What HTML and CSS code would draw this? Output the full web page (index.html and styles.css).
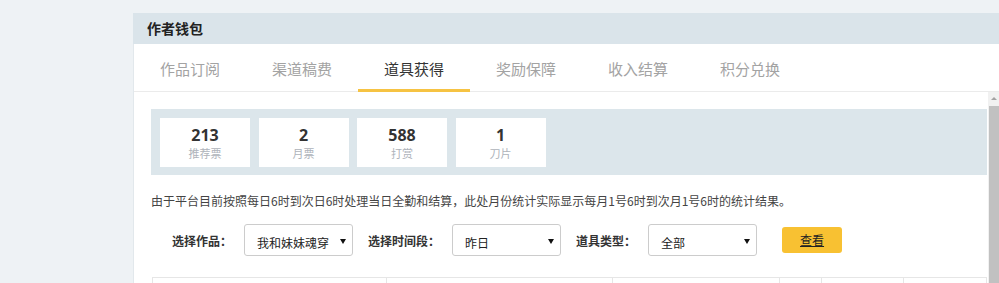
FILE: index.html
```html
<!DOCTYPE html>
<html>
	<head>
		<meta charset="utf-8">
		<title>作者钱包</title>
		<link rel="stylesheet" href="styles.css">
	</head>
	<body>
		<div class="wallet">
			<div class="wallet-hd">作者钱包</div>
			<div class="tabs">
				<a class="tab" href="javascript:;">作品订阅</a>
				<a class="tab" href="javascript:;">渠道稿费</a>
				<a class="tab active" href="javascript:;">道具获得</a>
				<a class="tab" href="javascript:;">奖励保障</a>
				<a class="tab" href="javascript:;">收入结算</a>
				<a class="tab" href="javascript:;">积分兑换</a>
			</div>
			<div class="frame">
				<div class="main">
					<div class="stats">
						<div class="stat"><b>213</b><span>推荐票</span></div>
						<div class="stat"><b>2</b><span>月票</span></div>
						<div class="stat"><b>588</b><span>打赏</span></div>
						<div class="stat"><b>1</b><span>刀片</span></div>
					</div>
					<p class="notice">由于平台目前按照每日6时到次日6时处理当日全勤和结算，此处月份统计实际显示每月1号6时到次月1号6时的统计结果。</p>
					<div class="filter">
						<label>选择作品：</label>
						<div class="select"><span class="val">我和妹妹魂穿</span><i class="arrow"></i></div>
						<label>选择时间段：</label>
						<div class="select"><span class="val">昨日</span><i class="arrow"></i></div>
						<label>道具类型：</label>
						<div class="select"><span class="val">全部</span><i class="arrow"></i></div>
						<a class="btn" href="javascript:;">查看</a>
					</div>
					<div class="table">
						<div class="cell"></div>
						<div class="cell"></div>
						<div class="cell"></div>
						<div class="cell"></div>
						<div class="cell"></div>
						<div class="cell"></div>
					</div>
				</div>
				<div class="scrollbar">
					<div class="sb-up"></div>
					<div class="sb-thumb"></div>
				</div>
			</div>
		</div>
	</body>
</html>
```

FILE: styles.css
```css
*{
	padding: 0px;
	margin: 0px;
	box-sizing: border-box;
}
body{
	width: 999px;
	height: 283px;
	overflow: hidden;
	background-color: #eef2f5;
	font-family: "Noto Sans CJK SC", sans-serif;
	color: #333;
}
.wallet{
	margin: 13px 0px 0px 133px;
	background-color: #fff;
	border-left: 1px solid #e2e8ec;
	height: 400px;
}
.wallet-hd{
	height: 31px;
	line-height: 31px;
	padding-left: 14px;
	margin-left: -1px;
	background-color: #dae4ea;
	font-size: 14px;
	font-weight: bold;
	color: #222;
}
.tabs{
	display: flex;
	height: 48px;
	border-bottom: 1px solid #ebebeb;
}
.tab{
	width: 112px;
	height: 48px;
	padding-top: 13px;
	line-height: 24px;
	text-align: center;
	font-size: 15px;
	color: #a3a3a3;
	text-decoration: none;
	border-bottom: 3px solid transparent;
}
.tab.active{
	color: #333;
	border-bottom-color: #f6c343;
}
.frame{
	display: flex;
	height: 300px;
}
.main{
	flex: 1;
	padding: 17px 1px 0px 17px;
}
.scrollbar{
	width: 11px;
	display: flex;
	flex-direction: column;
	background-color: #f1f1f1;
}
.sb-up{
	height: 14px;
	position: relative;
}
.sb-up:after{
	content: "";
	position: absolute;
	left: 3px;
	top: 5px;
	border-left: 3px solid transparent;
	border-right: 3px solid transparent;
	border-bottom: 3px solid #a3a3a3;
}
.sb-thumb{
	flex: 1;
	margin-left: 1px;
	background-color: #c1c1c1;
}
.stats{
	display: flex;
	gap: 8.5px;
	padding: 9px 9px 8px 9px;
	background-color: #dce6eb;
}
.stat{
	width: 90px;
	height: 49px;
	padding-top: 7px;
	background-color: #fff;
	text-align: center;
}
.stat b{
	display: block;
	line-height: 20px;
	font-family: "Open Sans", sans-serif;
	font-size: 16px;
	font-weight: bold;
	color: #333;
}
.stat span{
	display: block;
	line-height: 16px;
	font-size: 11px;
	color: #aeb3ba;
}
.notice{
	margin-top: 17px;
	line-height: 18px;
	font-size: 12px;
	color: #444;
}
.filter{
	display: flex;
	align-items: center;
	margin-top: 14px;
	padding-left: 21px;
	height: 32px;
}
.filter label{
	margin-right: 12px;
	font-size: 12px;
	font-weight: bold;
	color: #333;
}
.select{
	position: relative;
	width: 109px;
	height: 32px;
	margin-right: 15px;
	padding: 0px 20px 0px 12px;
	line-height: 32px;
	border: 1px solid #ccc;
	border-radius: 3px;
	font-size: 12px;
	color: #222;
	white-space: nowrap;
}
.select .val{
	display: block;
	padding-top: 2px;
}
.arrow{
	position: absolute;
	right: 6px;
	top: 14px;
	border-left: 3px solid transparent;
	border-right: 3px solid transparent;
	border-top: 5px solid #111;
}
.btn{
	width: 60px;
	height: 26px;
	margin-left: 10px;
	line-height: 26px;
	text-align: center;
	background-color: #f8c132;
	border-radius: 3px;
	font-size: 12px;
	color: #222;
}
.table{
	display: grid;
	grid-template-columns: 234px 226px 167px 42px 82px 83px;
	margin: 21px 0px 0px 1px;
	width: 835px;
	border-top: 1px solid #e6e6e6;
	border-left: 1px solid #e6e6e6;
}
.cell{
	height: 40px;
	border-right: 1px solid #e6e6e6;
	border-bottom: 1px solid #e6e6e6;
}
```
